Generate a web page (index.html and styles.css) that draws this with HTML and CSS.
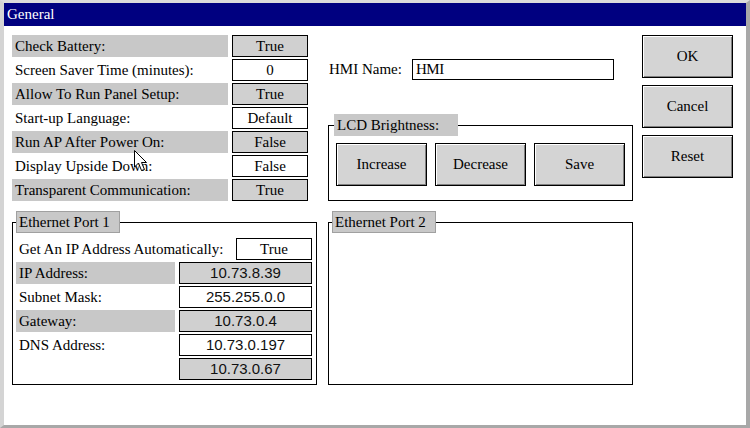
FILE: index.html
```html
<!DOCTYPE html>
<html>
<head>
<meta charset="utf-8">
<link rel="stylesheet" href="styles.css">
</head>
<body>
<div class="window">
  <div class="titlebar">General</div>
  <div class="content">
    <div class="col col-left">
      <div class="settings">
        <div class="label shaded">Check Battery:</div><div class="value shaded">True</div>
        <div class="label">Screen Saver Time (minutes):</div><div class="value">0</div>
        <div class="label shaded">Allow To Run Panel Setup:</div><div class="value shaded">True</div>
        <div class="label">Start-up Language:</div><div class="value">Default</div>
        <div class="label shaded">Run AP After Power On:</div><div class="value shaded">False</div>
        <div class="label">Display Upside Down:</div><div class="value">False</div>
        <div class="label shaded">Transparent Communication:</div><div class="value shaded">True</div>
      </div>
      <fieldset class="group eth1">
        <legend class="legend boxed">Ethernet Port 1</legend>
        <div class="auto-row">
          <div class="auto-label">Get An IP Address Automatically:</div>
          <div class="value">True</div>
        </div>
        <div class="net">
          <div class="label shaded">IP Address:</div><div class="value ip shaded">10.73.8.39</div>
          <div class="label">Subnet Mask:</div><div class="value ip">255.255.0.0</div>
          <div class="label shaded">Gateway:</div><div class="value ip shaded">10.73.0.4</div>
          <div class="label">DNS Address:</div><div class="value ip">10.73.0.197</div>
          <div class="label"></div><div class="value ip shaded">10.73.0.67</div>
        </div>
      </fieldset>
    </div>
    <div class="col col-mid">
      <div class="hmi-row">
        <span class="hmi-label">HMI Name:</span>
        <div class="hmi-input">HMI</div>
      </div>
      <fieldset class="group lcd">
        <legend class="legend plain">LCD Brightness:</legend>
        <div class="lcd-buttons">
          <div class="btn">Increase</div>
          <div class="btn">Decrease</div>
          <div class="btn">Save</div>
        </div>
      </fieldset>
      <fieldset class="group eth2">
        <legend class="legend boxed">Ethernet Port 2</legend>
      </fieldset>
    </div>
    <div class="col col-right">
      <div class="btn">OK</div>
      <div class="btn">Cancel</div>
      <div class="btn">Reset</div>
    </div>
    <svg class="cursor" width="14" height="22" viewBox="0 0 14 22">
      <polygon points="0.5,0.5 0.5,17 4.5,13 7.5,20.5 10.5,19.5 7.5,12.5 12.5,12.5" fill="#fff" stroke="#000" stroke-width="1"/>
    </svg>
  </div>
</div>
</body>
</html>
```

FILE: styles.css
```css
html, body {
  margin: 0;
  padding: 0;
  background: #fff;
}

body {
  font-family: "Liberation Serif", "Times New Roman", "DejaVu Serif", serif;
  font-size: 15px;
  color: #000;
}

.window {
  width: 750px;
  height: 428px;
  box-sizing: border-box;
  border-style: solid;
  border-width: 3px 4px 3px 4px;
  border-color: #dcdcdc #a8a8a8 #a8a8a8 #d4d4d4;
  background: #fff;
  display: flex;
  flex-direction: column;
}

.titlebar {
  height: 23px;
  line-height: 23px;
  background: #000080;
  color: #fff;
  padding-left: 3px;
  font-size: 15px;
}

.content {
  position: relative;
  display: flex;
  padding: 9px 0 0 8px;
}

.col {
  display: flex;
  flex-direction: column;
}

.col-left {
  width: 305px;
}

.col-mid {
  width: 305px;
  margin-left: 11px;
}

.col-right {
  width: 91px;
  margin-left: 9px;
  gap: 7px;
}

.settings {
  display: grid;
  grid-template-columns: 216px 76px;
  grid-auto-rows: 22px;
  column-gap: 4px;
  row-gap: 2px;
}

.label {
  height: 22px;
  line-height: 22px;
  padding-left: 3px;
  white-space: nowrap;
}

.label.shaded {
  background: #c8c8c8;
}

.value {
  box-sizing: border-box;
  height: 22px;
  line-height: 20px;
  border: 1px solid #000;
  background: #fff;
  text-align: center;
}

.value.shaded {
  background: #d0d0d0;
}

.value.ip {
  font-family: "Liberation Sans", Arial, sans-serif;
  font-size: 15px;
  color: #111;
}

.group {
  margin: 0;
  border: 1px solid #000;
  min-width: 0;
}

.legend {
  box-sizing: border-box;
  height: 22px;
  line-height: 20px;
  padding: 0 0 0 2px;
  background: #c8c8c8;
  white-space: nowrap;
}

.legend.boxed {
  border: 1px solid #a0a0a0;
  width: 104px;
}

.legend.plain {
  border: 1px solid #c8c8c8;
  width: 124px;
}

.eth1 {
  margin-top: 10px;
  padding: 5px 4px 4px 3px;
}

.auto-row {
  display: flex;
  justify-content: space-between;
  height: 22px;
}

.auto-label {
  line-height: 22px;
  padding-left: 3px;
  white-space: nowrap;
}

.auto-row .value {
  width: 76px;
}

.net {
  margin-top: 2px;
  display: grid;
  grid-template-columns: 159px 133px;
  grid-auto-rows: 22px;
  column-gap: 4px;
  row-gap: 2px;
}

.hmi-row {
  margin-top: 24px;
  display: flex;
  align-items: center;
  height: 21px;
}

.hmi-label {
  width: 83px;
  padding-left: 1px;
}

.hmi-input {
  box-sizing: border-box;
  width: 202px;
  height: 21px;
  line-height: 19px;
  border: 1px solid #000;
  padding-left: 3px;
  letter-spacing: -0.5px;
}

.lcd {
  margin-top: 34px;
  padding: 7px 7px 14px 5px;
}

.lcd-buttons {
  display: flex;
  gap: 8px;
  margin-left: 2px;
}

.btn {
  box-sizing: border-box;
  width: 91px;
  height: 43px;
  line-height: 41px;
  text-align: center;
  background: #d4d4d4;
  border: 1px solid #000;
  box-shadow: inset 1px 1px 0 #fff, inset -1px -1px 0 #808080;
}

.eth2 {
  margin-top: 10px;
  padding: 0 0 0 3px;
  height: 174px;
  box-sizing: border-box;
}

.cursor {
  position: absolute;
  left: 130px;
  top: 124px;
}
```
